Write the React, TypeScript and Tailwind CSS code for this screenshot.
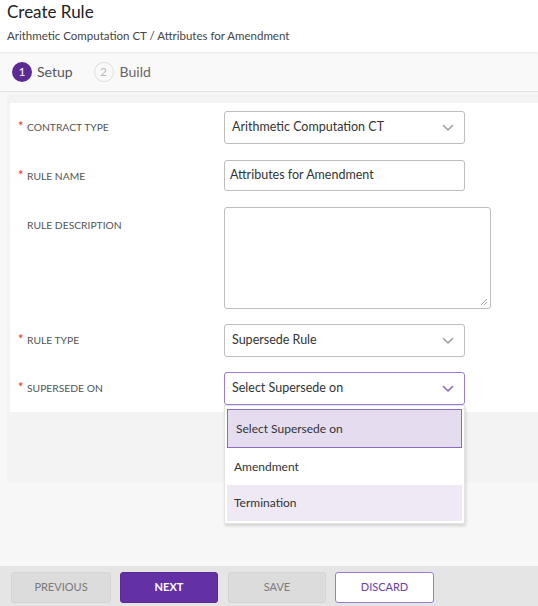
import React from 'react';

const font = { fontFamily: '"Lato", "Open Sans", sans-serif' };

function Chevron({ className }: { className?: string }) {
  return (
    <svg viewBox="0 0 12 8" className={className} fill="none" stroke="currentColor" strokeWidth="1.6" strokeLinecap="round" strokeLinejoin="round">
      <path d="M1.5 1.5 6 6l4.5-4.5" />
    </svg>
  );
}

function Label({ text, required }: { text: string; required?: boolean }) {
  return (
    <div className="w-[214px] shrink-0 flex items-start pl-[8px] pt-[9px]">
      <span className="w-[9px] text-[13px] leading-none text-[#e0302a]">{required ? '*' : ''}</span>
      <span className="text-[10.3px] leading-[14px] text-[#555] uppercase">{text}</span>
    </div>
  );
}

function SelectBox({ value, active }: { value: string; active?: boolean }) {
  return (
    <div
      className={`w-[241px] h-[33px] rounded-[3px] border bg-white flex items-center justify-between pl-[7px] pr-[10px] ${
        active ? 'border-[#9b7dcc]' : 'border-[#bdbdbd]'
      }`}
    >
      <span className="text-[12.5px] text-[#333]">{value}</span>
      <Chevron className={`w-[12px] h-[8px] ${active ? 'text-[#8a6bb8]' : 'text-[#a0a0a0]'}`} />
    </div>
  );
}

export default function App() {
  return (
    <div style={font} className="w-[538px] h-[606px] bg-[#f7f7f7] flex flex-col overflow-hidden">
      <div className="h-[52px] bg-white px-[7px] pt-[1px] shadow-[0_1px_2px_rgba(0,0,0,0.08)] relative z-10">
        <div className="text-[17px] leading-[22px] text-[#222]">Create Rule</div>
        <div className="text-[11.5px] leading-[16px] text-[#444] mt-[5px]">Arithmetic Computation CT / Attributes for Amendment</div>
      </div>

      <div className="h-[40px] bg-[#f9f9f9] border-b border-[#e2e2e2] flex items-center gap-[21px] pl-[12px]">
        <div className="flex items-center gap-[5px]">
          <span className="w-[20px] h-[20px] rounded-full bg-[#5b2a95] text-white text-[12px] flex items-center justify-center">1</span>
          <span className="text-[14px] text-[#555]">Setup</span>
        </div>
        <div className="flex items-center gap-[6px]">
          <span className="w-[20px] h-[20px] rounded-full border border-[#dedede] text-[#bbb] text-[12px] flex items-center justify-center">2</span>
          <span className="text-[14px] text-[#666]">Build</span>
        </div>
      </div>

      <div className="flex-1">
        <div className="ml-[7px] mt-[2px] h-[389px] bg-[#f3f3f3] pt-[9px] pl-[3px]">
          <div className="bg-white pt-[8px] pb-[7px] flex flex-col">
            <div className="flex">
              <Label text="Contract Type" required />
              <SelectBox value="Arithmetic Computation CT" />
            </div>
            <div className="flex mt-[16px]">
              <Label text="Rule Name" required />
              <div className="w-[241px] h-[31px] rounded-[3px] border border-[#bdbdbd] flex items-center pl-[5px]">
                <span className="text-[12.5px] text-[#333]">Attributes for Amendment</span>
              </div>
            </div>
            <div className="flex mt-[16px]">
              <div className="pt-[2px]">
                <Label text="Rule Description" />
              </div>
              <div className="relative w-[267px] h-[102px] rounded-[3px] border border-[#bdbdbd]">
                <svg viewBox="0 0 8 8" className="absolute right-[2px] bottom-[2px] w-[8px] h-[8px]" stroke="#9a9a9a" strokeWidth="0.9">
                  <path d="M1 7 7 1M4 7 7 4" />
                </svg>
              </div>
            </div>
            <div className="flex mt-[15px]">
              <Label text="Rule Type" required />
              <SelectBox value="Supersede Rule" />
            </div>
            <div className="flex mt-[15px]">
              <Label text="Supersede On" required />
              <div className="relative">
                <SelectBox value="Select Supersede on" active />
                <div className="absolute left-0 top-[33px] w-[241px] bg-white border border-[#e4e4e4] shadow-[1px_2px_3px_rgba(0,0,0,0.15)] p-[2px] z-20">
                  <div className="h-[39px] bg-[#e5dcf0] border border-[#8c6bbd] flex items-center pl-[8px] mt-[1px]">
                    <span className="text-[12px] text-[#333]">Select Supersede on</span>
                  </div>
                  <div className="h-[37px] flex items-center pl-[7px]">
                    <span className="text-[12px] text-[#333]">Amendment</span>
                  </div>
                  <div className="h-[36px] bg-[#efe9f5] flex items-center pl-[7px]">
                    <span className="text-[12px] text-[#333]">Termination</span>
                  </div>
                </div>
              </div>
            </div>
          </div>
        </div>
      </div>

      <div className="h-[40px] bg-[#e5e5e5] flex items-start pt-[6px] pl-[11px] gap-[9px]">
        <button className="w-[100px] h-[31px] rounded-[3px] bg-[#dcdcdc] border border-[#d4d4d4] text-[11px] text-[#7a7a7a]">PREVIOUS</button>
        <button className="w-[98px] h-[31px] rounded-[3px] bg-[#6331a3] border border-[#5a2a96] text-[11px] text-white font-bold">NEXT</button>
        <button className="w-[98px] h-[31px] rounded-[3px] bg-[#dcdcdc] border border-[#d4d4d4] text-[11px] text-[#7a7a7a] ml-[1px]">SAVE</button>
        <button className="w-[99px] h-[31px] rounded-[3px] bg-white border border-[#9a7dc9] text-[11px] text-[#6a42a6]">DISCARD</button>
      </div>
    </div>
  );
}
